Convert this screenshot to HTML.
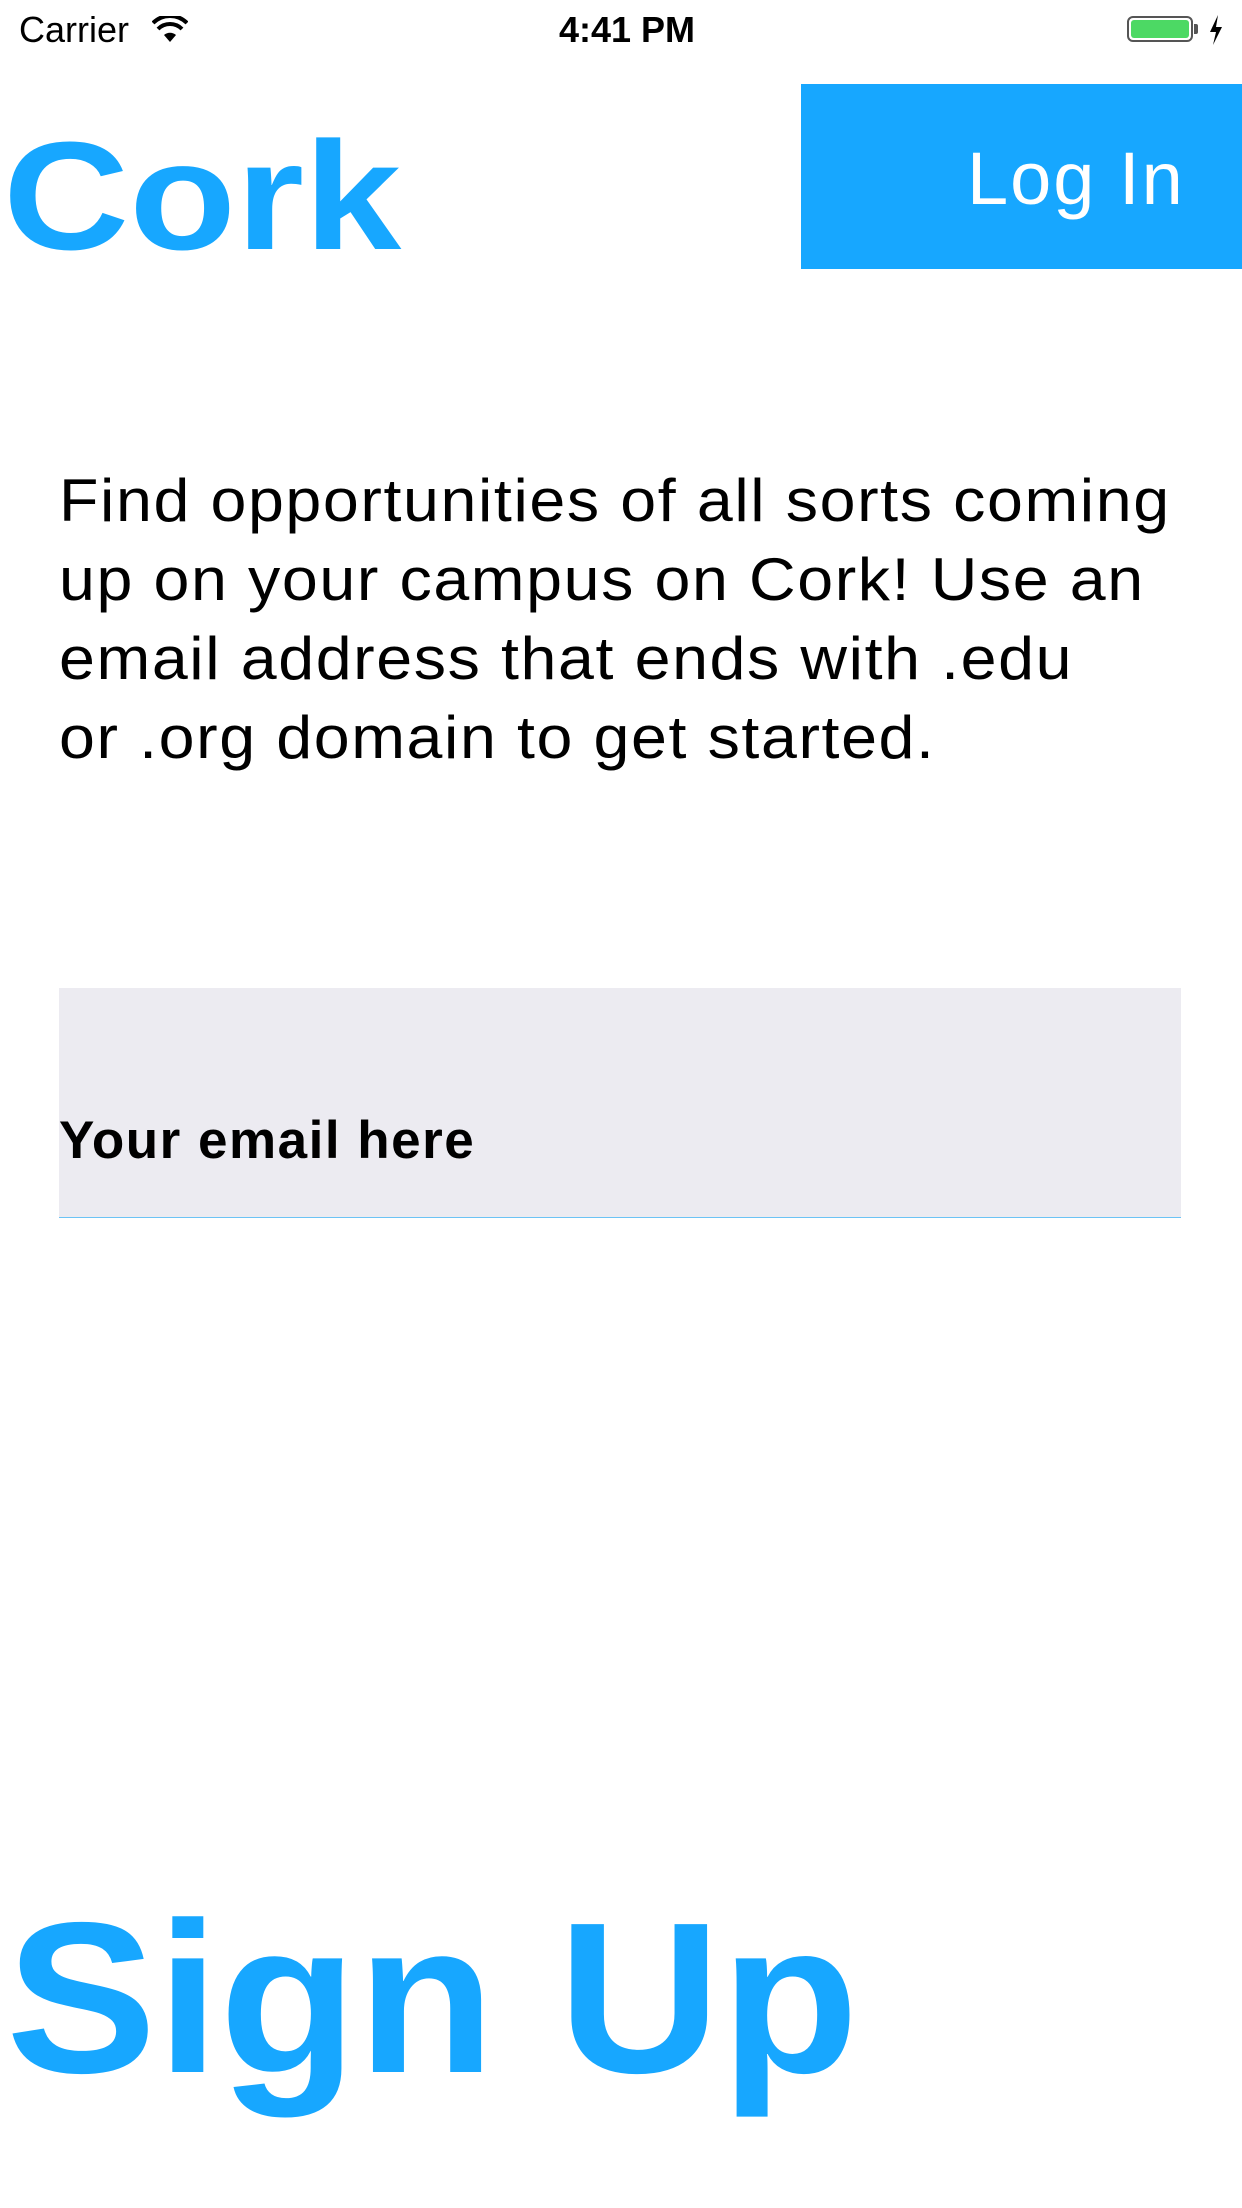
<!DOCTYPE html>
<html><head><meta charset="utf-8"><style>
html,body{margin:0;padding:0;}
body{width:1242px;height:2208px;position:relative;background:#fff;overflow:hidden;font-family:"Liberation Sans",sans-serif;}
.a{position:absolute;white-space:nowrap;line-height:1;transform-origin:0 0;}
</style></head><body>
<div class="a" style="left:19px;top:12px;font-size:36px;">Carrier</div>
<svg class="a" style="left:152px;top:16px" width="36" height="28" viewBox="0 0 36 28"><path d="M18 26 L12 19 A9 9 0 0 1 24 19 Z" fill="#000"/><path d="M6 13 A17 17 0 0 1 30 13" stroke="#000" stroke-width="4" fill="none"/><path d="M1 7 A24 24 0 0 1 35 7" stroke="#000" stroke-width="4" fill="none"/></svg>
<div class="a" style="left:0;width:1254px;text-align:center;top:12px;font-size:36px;font-weight:bold;">4:41 PM</div>
<div class="a" style="left:1127px;top:16px;width:66px;height:26px;border:2px solid #555;border-radius:6px;box-sizing:border-box;padding:2px;"><div style="width:100%;height:100%;background:#4cd964;border-radius:3px"></div></div>
<div class="a" style="left:1194px;top:24px;width:4px;height:10px;background:#555;border-radius:0 2px 2px 0"></div>
<svg class="a" style="left:1208px;top:15px" width="16" height="30" viewBox="0 0 16 30"><path d="M10 0 L2 17 H8 L5 30 L14 12 H8 Z" fill="#000"/></svg>
<div class="a" style="left:3px;top:119px;font-size:154px;font-weight:bold;color:#17a7ff;transform:scaleX(1.135);">Cork</div>
<div class="a" style="left:801px;top:84px;width:441px;height:185px;background:#17a7ff;"></div>
<div class="a" style="left:967px;top:142px;font-size:74px;color:#fff;letter-spacing:2px;">Log In</div>
<div class="a" style="left:59px;top:461px;font-size:60px;line-height:79px;color:#000;letter-spacing:1.5px;transform:scaleX(1.075);">Find opportunities of all sorts coming<br>up on your campus on Cork! Use an<br>email address that ends with .edu<br>or .org domain to get started.</div>
<div class="a" style="left:59px;top:988px;width:1122px;height:229px;background:#ecebf1;border-bottom:1px solid #6cc3f5;"></div>
<div class="a" style="left:59px;top:1114px;font-size:53px;font-weight:bold;color:#000;letter-spacing:1.5px;">Your email here</div>
<div class="a" style="left:6px;top:1890px;font-size:215px;font-weight:bold;color:#17a7ff;transform:scaleX(1.05);">Sign Up</div>
</body></html>
